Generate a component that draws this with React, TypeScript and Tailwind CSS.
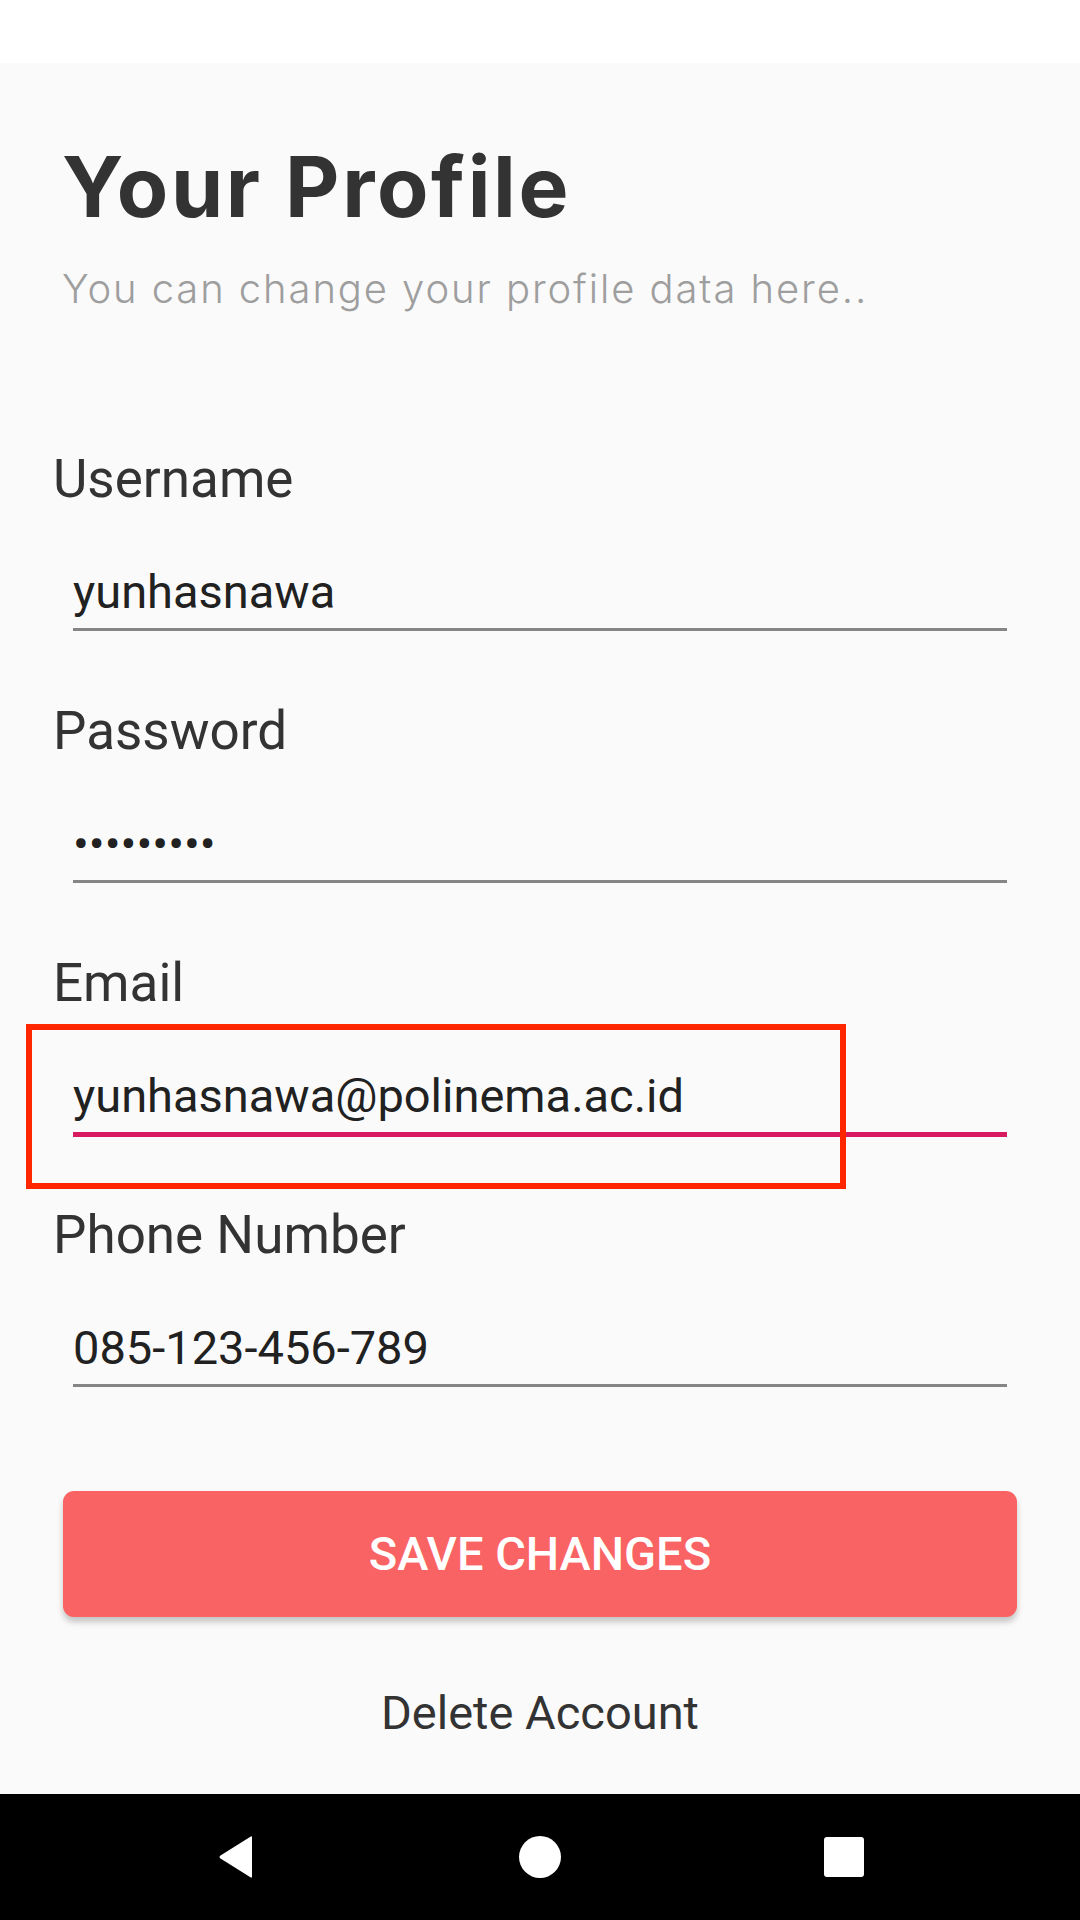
import React from "react";

type FieldProps = {
  label: string;
  value: string;
  focused?: boolean;
  highlight?: boolean;
};

function Field({ label, value, focused, highlight }: FieldProps) {
  return (
    <div className="relative flex flex-col">
      <label className="pl-[2px] text-[53px] leading-[61px] text-[#333333]">{label}</label>
      <div className="mt-[54px] ml-[22px] w-[934px]">
        <div className="text-[47px] leading-[56px] text-[#212121] whitespace-nowrap">{value}</div>
        <div className="mt-[8px] h-[5px]">
          {focused ? (
            <div className="h-[5px] bg-[#d81b60]" />
          ) : (
            <div className="h-[3px] bg-[#858585]" />
          )}
        </div>
      </div>
      {/* annotation frame drawn over the focused field */}
      {highlight && (
        <div className="absolute left-[-25px] top-[71px] w-[820px] h-[165px] border-[6px] border-[#ff2600] pointer-events-none" />
      )}
    </div>
  );
}

export default function App() {
  return (
    <div className="w-[1080px] h-[1920px] flex flex-col bg-[#fafafa] font-['Roboto',sans-serif] overflow-hidden">
      {/* status bar */}
      <div className="h-[63px] shrink-0 bg-white" />

      <main className="flex-1 flex flex-col">
        <h1 className="pl-[62px] pt-[74px] font-['Inter',sans-serif] text-[84px] leading-[100px] font-bold text-[#333333] tracking-[2.6px]">
          Your Profile
        </h1>
        <p className="pl-[62px] mt-[28px] font-['Inter',sans-serif] text-[40px] leading-[48px] font-light text-[#9e9e9e] tracking-[1.9px]">
          You can change your profile data here..
        </p>

        <div className="mt-[136px] pl-[51px] flex flex-col gap-[68px]">
          <Field label="Username" value="yunhasnawa" />
          <Field label="Password" value="•••••••••" />
          <Field label="Email" value="yunhasnawa@polinema.ac.id" focused highlight />
          <Field label="Phone Number" value="085-123-456-789" />
        </div>

        <button className="mt-[102px] ml-[63px] w-[954px] h-[126px] rounded-[11px] bg-[#fa6363] shadow-[0_5px_6px_rgba(0,0,0,0.22)] text-white text-[47px] font-medium">
          SAVE CHANGES
        </button>

        <div className="mt-[68px] text-center text-[47px] leading-[56px] text-[#333333]">
          Delete Account
        </div>
      </main>

      {/* navigation bar */}
      <nav className="h-[126px] shrink-0 bg-black flex items-center justify-center gap-[184px]">
        <div className="w-[120px] flex justify-center">
          <svg width="38" height="44" viewBox="0 0 38 44">
            <path d="M35 2.5 L35 41.5 Q35 43.5 33 42 L3.5 23.5 Q1.5 22 3.5 20.5 L33 2 Q35 0.5 35 2.5 Z" fill="white" />
          </svg>
        </div>
        <div className="w-[120px] flex justify-center">
          <div className="w-[42px] h-[42px] rounded-full bg-white" />
        </div>
        <div className="w-[120px] flex justify-center">
          <div className="w-[40px] h-[40px] rounded-[3px] bg-white" />
        </div>
      </nav>
    </div>
  );
}
